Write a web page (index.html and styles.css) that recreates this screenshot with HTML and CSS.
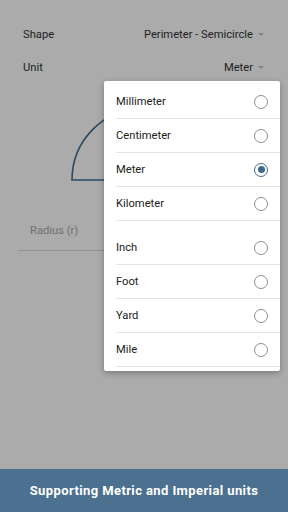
FILE: index.html
```html
<!DOCTYPE html>
<html lang="en">
<head>
    <meta charset="UTF-8">
    <meta name="viewport" content="width=device-width, initial-scale=1.0">
    <title>Perimeter - Semicircle</title>
    <link rel="stylesheet" href="styles.css">
</head>
<body>
    <div class="screen">
        <div class="form">
            <div class="row">
                <span class="label">Shape</span>
                <span class="select">Perimeter - Semicircle<i class="caret"></i></span>
            </div>
            <div class="row">
                <span class="label">Unit</span>
                <span class="select">Meter<i class="caret"></i></span>
            </div>
            <svg class="figure" width="288" height="100" viewBox="0 0 288 100">
                <path d="M72 96 A72 72 0 0 1 216 96 Z" fill="none" stroke="#416f93" stroke-width="1.6"/>
            </svg>
            <div class="field">Radius (r)</div>
        </div>

        <!-- fondo oscurecido del menu -->
        <div class="scrim"></div>

        <ul class="menu">
            <li class="item">Millimeter<span class="radio"></span></li>
            <li class="item">Centimeter<span class="radio"></span></li>
            <li class="item">Meter<span class="radio checked"></span></li>
            <li class="item">Kilometer<span class="radio"></span></li>
            <li class="spacer"></li>
            <li class="item">Inch<span class="radio"></span></li>
            <li class="item">Foot<span class="radio"></span></li>
            <li class="item">Yard<span class="radio"></span></li>
            <li class="item">Mile<span class="radio"></span></li>
        </ul>

        <div class="banner">Supporting Metric and Imperial units</div>
    </div>
</body>
</html>
```

FILE: styles.css
```css
/* Estilos base */
* {
    margin: 0;
    padding: 0;
    box-sizing: border-box;
}

body {
    font-family: Roboto, 'Liberation Sans', sans-serif;
    background: #fff;
}

.screen {
    position: relative;
    width: 288px;
    height: 512px;
    display: flex;
    flex-direction: column;
    overflow: hidden;
    background: #fff;
}

.form {
    flex: 1;
    padding-top: 18px;
}

.row {
    height: 33px;
    display: flex;
    justify-content: space-between;
    align-items: center;
    padding: 0 24px 0 23px;
    font-size: 11.2px;
    color: #333;
}

.select {
    display: flex;
    align-items: center;
}

.caret {
    margin-left: 5px;
    width: 0;
    height: 0;
    border-left: 3.5px solid transparent;
    border-right: 3.5px solid transparent;
    border-top: 3.5px solid #c4c4c4;
}

.figure {
    display: block;
}

.field {
    margin: 38px 18px 0;
    padding: 0 12px 10px;
    line-height: 18px;
    font-size: 11.2px;
    color: #a8a8a8;
    border-bottom: 1px solid #dcdcdc;
}

.scrim {
    position: absolute;
    inset: 0;
    background: rgba(0, 0, 0, 0.33);
}

.menu {
    position: absolute;
    left: 104px;
    top: 81px;
    width: 176px;
    padding: 4px 0;
    list-style: none;
    background: #fff;
    border-radius: 2px;
    box-shadow: 0 2px 6px rgba(0, 0, 0, 0.3);
}

.item {
    height: 34px;
    margin-left: 12px;
    padding-right: 12px;
    display: flex;
    justify-content: space-between;
    align-items: center;
    font-size: 11.2px;
    color: #212121;
    border-bottom: 1px solid #e4e4e4;
}

.spacer {
    height: 10px;
}

.radio {
    width: 14px;
    height: 14px;
    border: 1.3px solid #8c8c8c;
    border-radius: 50%;
    display: flex;
    align-items: center;
    justify-content: center;
}

.radio.checked {
    border-color: #3e6990;
}

.radio.checked::after {
    content: "";
    width: 7px;
    height: 7px;
    border-radius: 50%;
    background: #3e6990;
}

.banner {
    position: relative;
    height: 43px;
    display: flex;
    align-items: center;
    justify-content: center;
    background: #4b7090;
    color: #fff;
    font-size: 13px;
    font-weight: bold;
    letter-spacing: 0.4px;
}
```
